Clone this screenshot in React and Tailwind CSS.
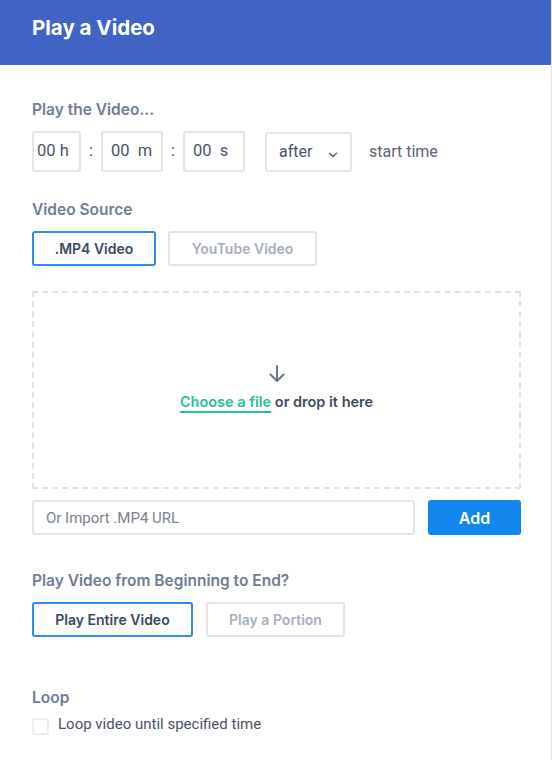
import React, { useState } from 'react';

const labelCls = "text-[15.5px] font-semibold text-[#6f7d93] leading-5";

const App = () => {
  const [source, setSource] = useState('mp4');
  const [mode, setMode] = useState('entire');
  const [loop, setLoop] = useState(false);

  const tab = (active) =>
    `h-[35px] rounded-[3px] border-2 text-[14px] font-semibold ${
      active ? 'border-[#2b8de8] text-[#3c4a5e]' : 'border-[#e1e3e8] text-[#a8b0be]'
    }`;

  return (
    <div className="w-[552px] min-h-[760px] bg-white border-r border-[#e4e6ea]" style={{ fontFamily: 'Inter, "Noto Sans", sans-serif' }}>
      {/* Header */}
      <div className="h-[65px] bg-[#4163c4] px-8 flex items-center">
        <h1 className="text-[20.5px] font-bold text-white -mt-[9px]">Play a Video</h1>
      </div>

      <div className="pl-8 pr-[30px] pt-[35px]">
        {/* Start time */}
        <div className={labelCls}>Play the Video...</div>
        <div className="mt-[11px] flex items-center text-[16.5px] text-[#4a5568]" style={{ fontFamily: 'Roboto, sans-serif' }}>
          <div className="w-[49px] h-[41px] border-2 border-[#e3e5e9] rounded-[3px] flex items-center pl-[3px]">00 h</div>
          <span className="w-[20px] text-center">:</span>
          <div className="w-[62px] h-[41px] border-2 border-[#e3e5e9] rounded-[3px] flex items-center pl-[8px]">00&nbsp; m</div>
          <span className="w-[20px] text-center">:</span>
          <div className="w-[62px] h-[41px] border-2 border-[#e3e5e9] rounded-[3px] flex items-center pl-[8px]">00&nbsp; s</div>
          <div className="ml-[20px] w-[87px] h-[40px] border-2 border-[#e3e5e9] rounded-[3px] flex items-center pl-[12px] text-[16px]">
            after
            <svg className="ml-[16px] mt-[6px]" width="10" height="6" viewBox="0 0 10 6" fill="none">
              <path d="M1.5 1.2 5 4.5 8.5 1.2" stroke="#5a6577" strokeWidth="1.5" strokeLinecap="round" strokeLinejoin="round" />
            </svg>
          </div>
          <span className="ml-[17px] text-[16px] text-[#5b6474]">start time</span>
        </div>

        {/* Video source */}
        <div className={`${labelCls} mt-[28px]`}>Video Source</div>
        <div className="mt-[11px] flex gap-[12px]">
          <button className={`${tab(source === 'mp4')} w-[124px]`} onClick={() => setSource('mp4')}>.MP4 Video</button>
          <button className={`${tab(source === 'yt')} w-[149px]`} onClick={() => setSource('yt')}>YouTube Video</button>
        </div>

        {/* Drop zone */}
        <div className="mt-[25px] h-[198px] border-2 border-dashed border-[#e2e2e2] rounded-[2px] flex flex-col items-center justify-center">
          <svg className="mt-[-2px]" width="16" height="18" viewBox="0 0 16 18" fill="none">
            <path d="M8 1v15M1.5 9.5 8 16l6.5-6.5" stroke="#6b778a" strokeWidth="2" strokeLinecap="round" strokeLinejoin="round" />
          </svg>
          <div className="mt-[8px] text-[14.5px] font-semibold text-[#3f4a5c]">
            <span className="text-[#25c29a] underline decoration-2 underline-offset-[4px]">Choose a file</span> or drop it here
          </div>
        </div>

        {/* URL import */}
        <div className="mt-[11px] flex gap-[13px]">
          <input
            className="flex-1 h-[35px] border-2 border-[#e3e5e9] rounded-[3px] px-[12px] text-[15px] text-[#4a5568] placeholder-[#7d8189] outline-none"
            style={{ fontFamily: 'Roboto, sans-serif' }}
            placeholder="Or Import .MP4 URL"
          />
          <button className="w-[93px] h-[35px] bg-[#1387ee] rounded-[3px] text-white text-[16px] font-semibold">Add</button>
        </div>

        {/* Play mode */}
        <div className={`${labelCls} mt-[36px]`}>Play Video from Beginning to End?</div>
        <div className="mt-[11px] flex gap-[13px]">
          <button className={`${tab(mode === 'entire')} w-[161px]`} onClick={() => setMode('entire')}>Play Entire Video</button>
          <button className={`${tab(mode === 'portion')} w-[139px]`} onClick={() => setMode('portion')}>Play a Portion</button>
        </div>

        {/* Loop */}
        <div className={`${labelCls} mt-[51px]`}>Loop</div>
        <label className="mt-[5px] flex items-center gap-[9px] cursor-pointer">
          <span
            className={`w-[17px] h-[17px] border-2 rounded-[2px] mt-[4px] ${loop ? 'border-[#2b8de8] bg-[#2b8de8]' : 'border-[#eceef0]'}`}
            onClick={() => setLoop(!loop)}
          />
          <span className="text-[15px] text-[#4a5363]" style={{ fontFamily: 'Roboto, sans-serif' }}>Loop video until specified time</span>
        </label>
      </div>
    </div>
  );
};

export default App;
